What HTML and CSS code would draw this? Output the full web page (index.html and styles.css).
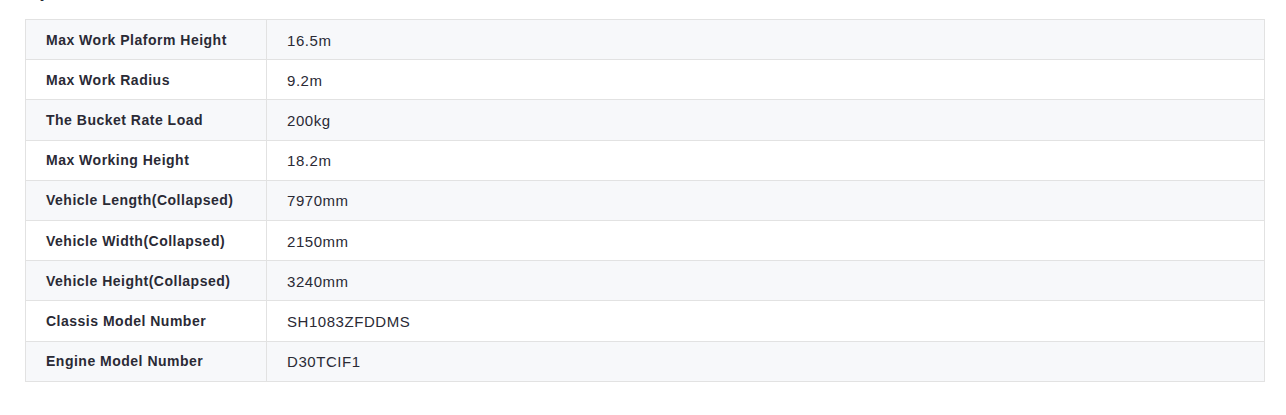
FILE: index.html
```html
<!DOCTYPE html>
<html lang="en">
<head>
<meta charset="utf-8">
<title>Specifications</title>
<link rel="stylesheet" href="styles.css">
</head>
<body>
<section class="specs">
  <h2 class="specs-title">Specifications</h2>
  <table class="spec-table">
    <tbody>
      <tr><th>Max Work Plaform Height</th><td>16.5m</td></tr>
      <tr><th>Max Work Radius</th><td>9.2m</td></tr>
      <tr><th>The Bucket Rate Load</th><td>200kg</td></tr>
      <tr><th>Max Working Height</th><td>18.2m</td></tr>
      <tr><th>Vehicle Length(Collapsed)</th><td>7970mm</td></tr>
      <tr><th>Vehicle Width(Collapsed)</th><td>2150mm</td></tr>
      <tr><th>Vehicle Height(Collapsed)</th><td>3240mm</td></tr>
      <tr><th>Classis Model Number</th><td>SH1083ZFDDMS</td></tr>
      <tr><th>Engine Model Number</th><td>D30TCIF1</td></tr>
    </tbody>
  </table>
</section>
</body>
</html>
```
FILE: styles.css
```css
html, body {
  margin: 0;
  padding: 0;
  background: #ffffff;
}
body {
  font-family: "Liberation Sans", Arial, sans-serif;
  color: #2a2a35;
  overflow: hidden;
}
.specs {
  padding: 0 21px 0 25px;
}
.specs-title {
  margin: -22px 0 17px 1px;
  font-size: 20px;
  line-height: 24px;
  height: 24px;
  font-weight: bold;
  color: #2a2a35;
}
.spec-table {
  width: 100%;
  border-collapse: collapse;
  border: 1px solid #e2e2e2;
}
.spec-table th,
.spec-table td {
  border: 1px solid #e2e2e2;
  padding: 9.6px 20px 8.5px;
  line-height: 21.1px;
  text-align: left;
  vertical-align: middle;
}
.spec-table th {
  width: 200px;
  font-size: 14px;
  font-weight: bold;
  letter-spacing: 0.5px;
}
.spec-table td {
  font-size: 15px;
  letter-spacing: 0.55px;
}
.spec-table tr:nth-child(odd) {
  background: #f7f8fa;
}
```
